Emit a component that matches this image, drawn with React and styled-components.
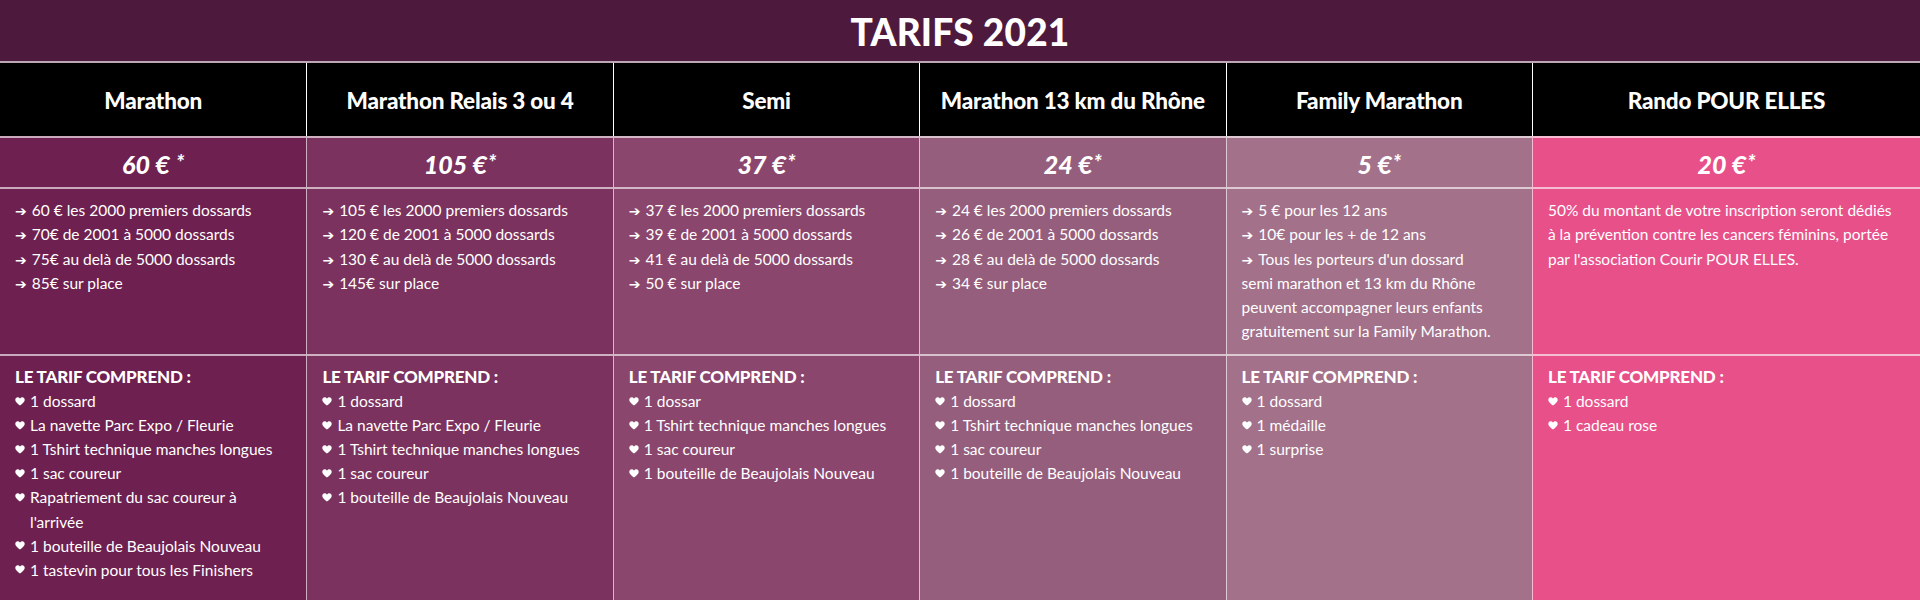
import React from "react";
import styled, { createGlobalStyle } from "styled-components";

const Global = createGlobalStyle`
  html, body { margin: 0; padding: 0; background: #4d1a3e; }
  body { font-family: Lato, "Noto Sans", sans-serif; color: #fff; }
  * { box-sizing: border-box; }
`;

const LINE = "rgba(255,255,255,0.62)";

const Page = styled.div`
  width: 1920px;
  display: flex;
  flex-direction: column;
`;

const TitleBar = styled.header`
  height: 63px;
  background: #4d1a3e;
  border-bottom: 2px solid ${LINE};
  display: flex;
  align-items: center;
  justify-content: center;
`;

const Title = styled.h1`
  margin: 0;
  font-family: Lato, sans-serif;
  font-weight: 900;
  font-size: 37px;
  letter-spacing: 0.2px;
  line-height: 1;
  padding-top: 1px;
`;

const Grid = styled.div`
  display: grid;
  grid-template-columns: repeat(5, 306.4px) 1fr;
  grid-template-rows: 73px 51px 167px 262px;
`;

const Cell = styled.div`
  background: ${(p) => p.$tone};
  border-left: ${(p) => (p.$first ? "none" : `1px solid ${LINE}`)};
`;

const HeadCell = styled(Cell)`
  background: #000;
  border-left-color: ${(p) => (p.$first ? "transparent" : "#fff")};
  display: flex;
  align-items: center;
  justify-content: center;
  font-weight: 900;
  font-size: 22.5px;
  letter-spacing: -0.2px;
  padding-top: 2px;
`;

const PriceCell = styled(Cell)`
  border-top: 2px solid ${LINE};
  display: flex;
  align-items: center;
  justify-content: center;
  padding-top: 3px;
`;

const PriceText = styled.span`
  font-weight: 900;
  font-style: italic;
  font-size: 25px;
  white-space: pre;
`;

const Star = styled.sup`
  font-size: 21px;
  font-weight: 900;
  vertical-align: 4px;
  line-height: 0;
  margin-left: 1px;
`;

const DescCell = styled(Cell)`
  border-top: 2px solid ${LINE};
  padding: 9px 14px 0 15px;
  font-size: 15.5px;
  line-height: 24.3px;
`;

const Line = styled.div`
  white-space: nowrap;
  height: 24.3px;
`;

const Arrow = styled.span`
  font-family: "DejaVu Sans", sans-serif;
  font-size: 14px;
  font-weight: bold;
  line-height: 0;
  margin-right: 5px;
`;

const IncCell = styled(Cell)`
  border-top: 2px solid ${LINE};
  padding: 9px 14px 0 15px;
  font-size: 15.5px;
  line-height: 24.1px;
`;

const IncTitle = styled.div`
  font-weight: 900;
  font-size: 17px;
  letter-spacing: -0.2px;
`;

const Item = styled.div`
  display: flex;
  align-items: flex-start;
  padding-right: ${(p) => p.$pr || 0}px;
`;

const HeartBox = styled.span`
  flex: none;
  width: 15px;
  height: 24px;
  display: flex;
  align-items: center;
`;

const Heart = () => (
  <HeartBox>
    <svg width="10" height="9" viewBox="0 0 10 9">
      <path
        d="M5 8.6 C 3.4 7.2 0.3 5.2 0.3 2.8 C 0.3 1.3 1.4 0.3 2.7 0.3 C 3.7 0.3 4.5 0.9 5 1.7 C 5.5 0.9 6.3 0.3 7.3 0.3 C 8.6 0.3 9.7 1.3 9.7 2.8 C 9.7 5.2 6.6 7.2 5 8.6 Z"
        fill="#fff"
      />
    </svg>
  </HeartBox>
);

const a = (text) => ({ arrow: true, text });
const p = (text) => ({ arrow: false, text });

const columns = [
  {
    title: "Marathon",
    price: "60 € ",
    tone: "#6e2050",
    desc: [
      a("60 € les 2000 premiers dossards"),
      a("70€ de 2001 à 5000 dossards"),
      a("75€ au delà de 5000 dossards"),
      a("85€ sur place"),
    ],
    includes: [
      "1 dossard",
      "La navette Parc Expo / Fleurie",
      "1 Tshirt technique manches longues",
      "1 sac coureur",
      "Rapatriement du sac coureur à l'arrivée",
      "1 bouteille de Beaujolais Nouveau",
      "1 tastevin pour tous les Finishers",
    ],
  },
  {
    title: "Marathon Relais 3 ou 4",
    price: "105 €",
    tone: "#7b325e",
    desc: [
      a("105 € les 2000 premiers dossards"),
      a("120 € de 2001 à 5000 dossards"),
      a("130 € au delà de 5000 dossards"),
      a("145€ sur place"),
    ],
    includes: [
      "1 dossard",
      "La navette Parc Expo / Fleurie",
      "1 Tshirt technique manches longues",
      "1 sac coureur",
      "1 bouteille de Beaujolais Nouveau",
    ],
  },
  {
    title: "Semi",
    price: "37 €",
    tone: "#8b466d",
    desc: [
      a("37 € les 2000 premiers dossards"),
      a("39 € de 2001 à 5000 dossards"),
      a("41 € au delà de 5000 dossards"),
      a("50 € sur place"),
    ],
    includes: [
      "1 dossar",
      "1 Tshirt technique manches longues",
      "1 sac coureur",
      "1 bouteille de Beaujolais Nouveau",
    ],
  },
  {
    title: "Marathon 13 km du Rhône",
    price: "24 €",
    tone: "#955e7c",
    desc: [
      a("24 € les 2000 premiers dossards"),
      a("26 € de 2001 à 5000 dossards"),
      a("28 € au delà de 5000 dossards"),
      a("34 € sur place"),
    ],
    includes: [
      "1 dossard",
      "1 Tshirt technique manches longues",
      "1 sac coureur",
      "1 bouteille de Beaujolais Nouveau",
    ],
  },
  {
    title: "Family Marathon",
    price: "5 €",
    tone: "#a3718a",
    desc: [
      a("5 € pour les 12 ans"),
      a("10€ pour les + de 12 ans"),
      a("Tous les porteurs d'un dossard"),
      p("semi marathon et 13 km du Rhône"),
      p("peuvent accompagner leurs enfants"),
      p("gratuitement sur la Family Marathon."),
    ],
    includes: ["1 dossard", "1 médaille", "1 surprise"],
  },
  {
    title: "Rando POUR ELLES",
    price: "20 €",
    tone: "#e8508a",
    desc: [
      p("50% du montant de votre inscription seront dédiés"),
      p("à la prévention contre les cancers féminins, portée"),
      p("par l'association Courir POUR ELLES."),
    ],
    includes: ["1 dossard", "1 cadeau rose"],
  },
];

export default function App() {
  return (
    <Page>
      <Global />
      <TitleBar>
        <Title>TARIFS 2021</Title>
      </TitleBar>
      <Grid>
        {columns.map((c, i) => (
          <HeadCell key={"h" + i} $first={i === 0}>
            {c.title}
          </HeadCell>
        ))}
        {columns.map((c, i) => (
          <PriceCell key={"p" + i} $first={i === 0} $tone={c.tone}>
            <PriceText>
              {c.price}
              <Star>*</Star>
            </PriceText>
          </PriceCell>
        ))}
        {columns.map((c, i) => (
          <DescCell key={"d" + i} $first={i === 0} $tone={c.tone}>
            {c.desc.map((l, j) => (
              <Line key={j}>
                {l.arrow && <Arrow>➔</Arrow>}
                {l.text}
              </Line>
            ))}
          </DescCell>
        ))}
        {columns.map((c, i) => (
          <IncCell key={"i" + i} $first={i === 0} $tone={c.tone}>
            <IncTitle>LE TARIF COMPREND :</IncTitle>
            {c.includes.map((t, j) => (
              <Item key={j} $pr={i === 0 ? 18 : 0}>
                <Heart />
                <span>{t}</span>
              </Item>
            ))}
          </IncCell>
        ))}
      </Grid>
    </Page>
  );
}
